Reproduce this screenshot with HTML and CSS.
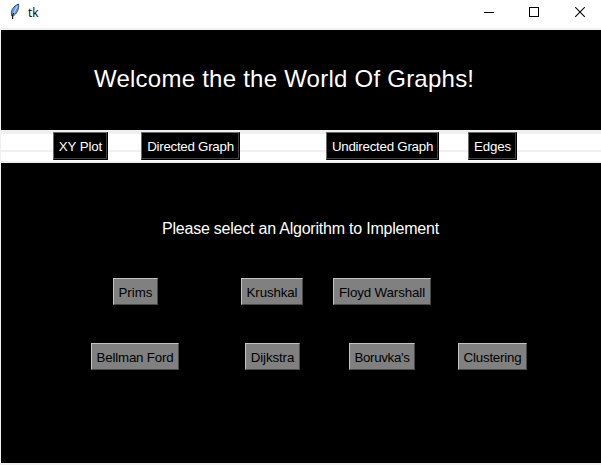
FILE: index.html
```html
<!DOCTYPE html>
<html lang="en">
<head>
<meta charset="utf-8">
<title>tk</title>
<link rel="stylesheet" href="styles.css">
</head>
<body>
<div class="window">
  <header class="titlebar">
    <svg class="feather" width="12" height="18" viewBox="0 0 12 18">
      <path d="M2.8 13C1.2 8 4 3 9.6 1C10.4 6 7.5 11 4.2 13Z" fill="#5f9be0" stroke="#3c4450" stroke-width=".9"/>
      <path d="M8.2 3L4.2 11" stroke="#a9d0fa" stroke-width="1.2" fill="none"/>
      <path d="M4.6 10L3.6 12.5V16" stroke="#111" stroke-width="1.1" fill="none"/>
    </svg>
    <span class="caption">tk</span>
    <svg class="controls" width="102" height="12" viewBox="0 0 102 12" fill="none" stroke="#000" shape-rendering="crispEdges">
      <path d="M0 5.5H10"/>
      <rect x="45.5" y=".5" width="9" height="9"/>
      <path d="M91.2 0.2L100.8 9.8M100.8 0.2L91.2 9.8" shape-rendering="auto" stroke-width="1.1"/>
    </svg>
  </header>
  <section class="banner"><h1>Welcome the the World Of Graphs!</h1></section>
  <nav class="toolbar">
    <button class="dark xy">XY Plot</button>
    <button class="dark directed">Directed Graph</button>
    <button class="dark undirected">Undirected Graph</button>
    <button class="dark edges">Edges</button>
  </nav>
  <main class="panel">
    <h2>Please select an Algorithm to Implement</h2>
    <div class="row">
      <button class="prims">Prims</button>
      <button class="krushkal">Krushkal</button>
      <button class="floyd">Floyd Warshall</button>
    </div>
    <div class="row">
      <button class="bellman">Bellman Ford</button>
      <button class="dijkstra">Dijkstra</button>
      <button class="boruvka">Boruvka's</button>
      <button class="clustering">Clustering</button>
    </div>
  </main>
</div>
</body>
</html>
```
FILE: styles.css
```css
* { box-sizing: border-box; }
body { margin: 0; background: #f0f0f0; font-family: "Liberation Sans", Arial, sans-serif; }
.window { width: 601px; height: 465px; overflow: hidden; }
.titlebar { display: flex; height: 28px; margin-bottom: 2px; background: #fff; }
.feather { margin: 3px 0 0 9px; }
.caption { margin: 5px 0 0 7px; font: 12px/16px "Open Sans", sans-serif; color: #000; }
.controls { margin: 7px 15px 0 auto; }
.banner { height: 100px; margin-left: 1px; padding: 35px 0 0 93px; background: #000; }
h1 { margin: 0; font-size: 24px; line-height: 28px; font-weight: 400; letter-spacing: .24px; color: #fff; white-space: nowrap; }
.toolbar {
  display: flex;
  height: 33px;
  margin-left: 1px;
  padding-top: 2px;
  background: linear-gradient(#f0f0f0 4px, #fff 4px 20px, #f0f0f0 20px 22px, #fff 22px 31px, #f0f0f0 31px);
}
button {
  height: 27px;
  padding: 2px 0 0;
  border: 1px solid;
  border-color: #c3c3c3 #484848 #484848 #c3c3c3;
  background: #808080;
  color: #000;
  font: 13.33px/23px "Liberation Sans", Arial, sans-serif;
  letter-spacing: -.12px;
  white-space: nowrap;
}
.dark {
  height: 28px;
  padding-top: 1px;
  border-color: #696969 #000 #000 #696969;
  background: #000;
  box-shadow: inset -1px -1px #404040;
  color: #fff;
}
.xy { width: 55px; margin-left: 52px; }
.directed { width: 99px; margin-left: 33px; letter-spacing: -.27px; }
.undirected { width: 113px; margin-left: 86px; letter-spacing: -.25px; }
.edges { width: 49px; margin-left: 29px; }
.panel { height: 300px; margin-left: 1px; padding-top: 56px; background: #000; }
h2 { margin: 0 0 39px 161px; font-size: 16px; line-height: 20px; font-weight: 400; letter-spacing: -.22px; color: #fff; white-space: nowrap; }
.row { display: flex; margin-bottom: 38px; }
.prims { width: 45px; margin-left: 112px; letter-spacing: 0; }
.krushkal { width: 62px; margin-left: 83px; }
.floyd { width: 98px; margin-left: 30px; }
.bellman { width: 88px; margin-left: 90px; letter-spacing: -.2px; }
.dijkstra { width: 55px; margin-left: 66px; }
.boruvka { width: 66px; margin-left: 49px; letter-spacing: -.35px; }
.clustering { width: 69px; margin-left: 43px; letter-spacing: -.22px; }
```
